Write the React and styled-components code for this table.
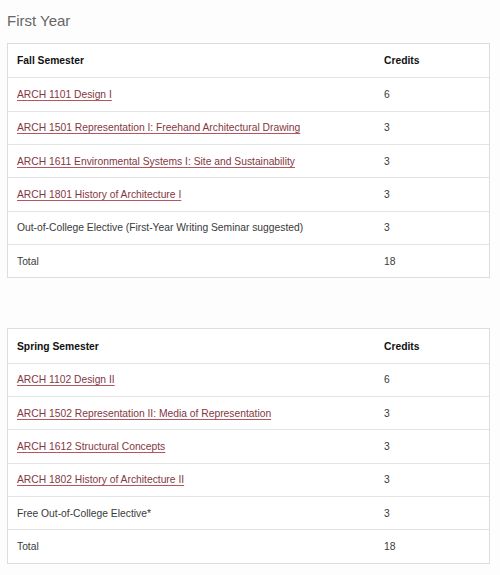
import React from "react";
import styled, { createGlobalStyle } from "styled-components";

const Global = createGlobalStyle`
  html, body { margin: 0; padding: 0; background: #fdfdfd; }
  body { font-family: "Liberation Sans", Arial, sans-serif; }
`;

const Page = styled.div`
  padding: 12px 10px 0 7px;
  width: 483px;
`;

const Title = styled.h2`
  margin: 0 0 14px 0;
  font-size: 15px;
  font-weight: normal;
  color: #666;
  line-height: 17px;
`;

const Table = styled.div`
  border: 1px solid #ddd;
  background: #fff;
  margin-bottom: ${(p) => p.$gap || 0}px;
`;

const Row = styled.div`
  display: grid;
  grid-template-columns: 1fr 105px;
  align-items: center;
  height: 33.35px;
  box-sizing: border-box;
  padding-left: 9px;
  border-top: ${(p) => (p.$first ? "none" : "1px solid #e3e3e3")};
  font-size: 10.3px;
  color: #3a3a3a;
`;

const Head = styled.span`
  font-weight: bold;
  color: #111;
`;

const Link = styled.a`
  color: #843742;
  text-decoration: underline;
  text-decoration-color: #b5555f;
  text-underline-offset: 2px;
`;

const Cell = styled.span``;

const tables = [
  {
    head: "Fall Semester",
    rows: [
      ["ARCH 1101 Design I", "6", true],
      ["ARCH 1501 Representation I: Freehand Architectural Drawing", "3", true],
      ["ARCH 1611 Environmental Systems I: Site and Sustainability", "3", true],
      ["ARCH 1801 History of Architecture I", "3", true],
      ["Out-of-College Elective (First-Year Writing Seminar suggested)", "3", false],
      ["Total", "18", false],
    ],
  },
  {
    head: "Spring Semester",
    rows: [
      ["ARCH 1102 Design II", "6", true],
      ["ARCH 1502 Representation II: Media of Representation", "3", true],
      ["ARCH 1612 Structural Concepts", "3", true],
      ["ARCH 1802 History of Architecture II", "3", true],
      ["Free Out-of-College Elective*", "3", false],
      ["Total", "18", false],
    ],
  },
];

export default function App() {
  return (
    <>
      <Global />
      <Page>
        <Title>First Year</Title>
        {tables.map((t, i) => (
          <Table key={t.head} $gap={i === 0 ? 50 : 0}>
            <Row $first>
              <Head>{t.head}</Head>
              <Head>Credits</Head>
            </Row>
            {t.rows.map(([name, cr, link]) => (
              <Row key={name}>
                {link ? <Link href="#">{name}</Link> : <Cell>{name}</Cell>}
                <Cell>{cr}</Cell>
              </Row>
            ))}
          </Table>
        ))}
      </Page>
    </>
  );
}
